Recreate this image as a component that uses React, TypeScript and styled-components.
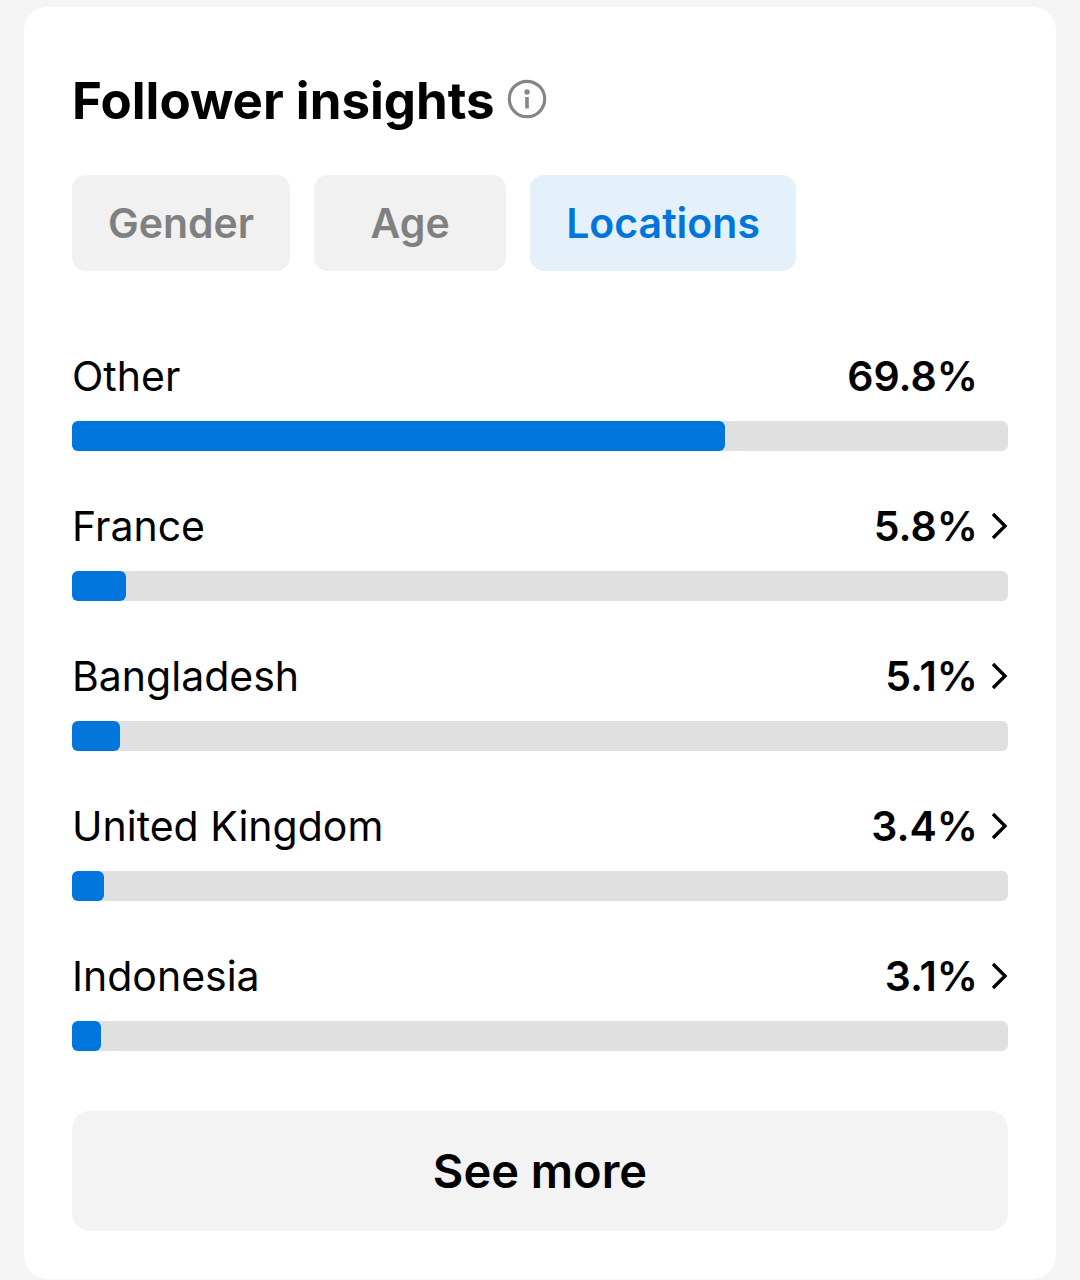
import React from "react";
import styled, { createGlobalStyle } from "styled-components";

const GlobalStyle = createGlobalStyle`
  *, *::before, *::after { box-sizing: border-box; }
  body {
    margin: 0;
    background: #f5f5f5;
    color: #000;
    font-family: Inter, "Liberation Sans", sans-serif;
  }
  button { font-family: inherit; border: 0; cursor: pointer; }
`;

const Page = styled.main`
  padding: 7px 24px 0;
`;

const Card = styled.section`
  background: #fff;
  border-radius: 24px;
  padding: 60px 48px 48px;
`;

const Header = styled.header`
  display: flex;
  align-items: baseline;
  gap: 12px;
  height: 68px;
`;

const Title = styled.h2`
  margin: 0;
  font-size: 51px;
  line-height: 68px;
  font-weight: 700;
  white-space: nowrap;
`;

const InfoButton = styled.button`
  display: flex;
  padding: 0;
  background: none;
  color: #868686;
`;

const Tabs = styled.div`
  display: flex;
  gap: 24px;
  margin-top: 40px;
`;

const Tab = styled.button<{ $active: boolean }>`
  min-width: 192px;
  height: 96px;
  padding: 0 36px;
  border-radius: 14px;
  background: ${(p) => (p.$active ? "#e4f1fb" : "#f1f1f1")};
  color: ${(p) => (p.$active ? "#0075dc" : "#808080")};
  font-size: 41px;
  line-height: 56px;
  font-weight: 600;
`;

const List = styled.ul`
  list-style: none;
  margin: 77px 0 0;
  padding: 0;
  display: grid;
  gap: 47px;
`;

const Row = styled.li`
  display: grid;
  gap: 17px;
`;

const RowHead = styled.div`
  display: flex;
  align-items: center;
  height: 56px;
  font-size: 41px;
  line-height: 56px;
`;

const Place = styled.span`
  flex: 1;
`;

const Share = styled.span`
  font-weight: 600;
`;

const ChevronSlot = styled.span`
  display: flex;
  justify-content: flex-end;
  width: 30px;
`;

const Track = styled.div`
  height: 30px;
  border-radius: 6px;
  background: #e0e0e0;
`;

const Fill = styled.div`
  height: 100%;
  border-radius: 6px;
  background: #0075dc;
`;

const MoreButton = styled.button`
  width: 100%;
  height: 120px;
  margin-top: 60px;
  border-radius: 18px;
  background: #f3f3f3;
  color: #000;
  font-size: 47px;
  line-height: 64px;
  font-weight: 600;
`;

const locations = [
  { name: "Other", share: 69.8, expandable: false },
  { name: "France", share: 5.8, expandable: true },
  { name: "Bangladesh", share: 5.1, expandable: true },
  { name: "United Kingdom", share: 3.4, expandable: true },
  { name: "Indonesia", share: 3.1, expandable: true },
];

const InfoIcon = () => (
  <svg width="40" height="40" viewBox="0 0 40 40" fill="none" aria-hidden="true">
    <circle cx="20" cy="20" r="17.7" stroke="currentColor" strokeWidth="3.2" />
    <circle cx="20" cy="13" r="2.7" fill="currentColor" />
    <path d="M20 18V29.5" stroke="currentColor" strokeWidth="3.6" />
  </svg>
);

const Chevron = () => (
  <svg width="18" height="30" viewBox="0 0 18 30" fill="none" aria-hidden="true">
    <path d="M3 3L15 15L3 27" stroke="#000" strokeWidth="3.4" />
  </svg>
);

export default function App() {
  const [tab, setTab] = React.useState("Locations");
  return (
    <Page>
      <GlobalStyle />
      <Card>
        <Header>
          <Title>Follower insights</Title>
          <InfoButton type="button" aria-label="About follower insights">
            <InfoIcon />
          </InfoButton>
        </Header>
        <Tabs role="tablist">
          {["Gender", "Age", "Locations"].map((name) => (
            <Tab
              key={name}
              type="button"
              role="tab"
              aria-selected={tab === name}
              $active={tab === name}
              onClick={() => setTab(name)}
            >
              {name}
            </Tab>
          ))}
        </Tabs>
        <List>
          {locations.map((item) => (
            <Row key={item.name}>
              <RowHead>
                <Place>{item.name}</Place>
                <Share>{item.share}%</Share>
                <ChevronSlot>{item.expandable && <Chevron />}</ChevronSlot>
              </RowHead>
              <Track>
                <Fill style={{ width: `${item.share}%` }} />
              </Track>
            </Row>
          ))}
        </List>
        <MoreButton type="button">See more</MoreButton>
      </Card>
    </Page>
  );
}
